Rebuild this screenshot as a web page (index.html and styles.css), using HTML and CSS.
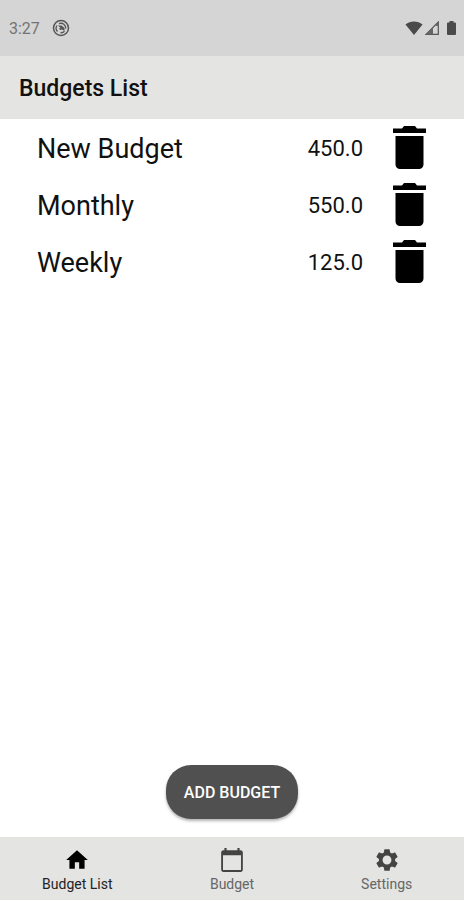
FILE: index.html
```html
<!DOCTYPE html>
<html lang="en">
<head>
  <meta charset="UTF-8">
  <meta name="viewport" content="width=device-width, initial-scale=1">
  <title>Budgets List</title>
  <link rel="stylesheet" href="styles.css">
</head>
<body>

  <!-- Status bar -->
  <div class="status-bar">
    <span class="clock">3:27</span>
    <svg class="status-app" width="18" height="18" viewBox="0 0 18 18" fill="none" stroke="#555">
      <circle cx="9" cy="9" r="7.500" stroke-width="1.500"/>
      <path d="M5.500 12.500A4.800 4.800 0 0 1 5 6.500M7 4.700a4.800 4.800 0 0 1 6.700 5M12.500 12.300a4.800 4.800 0 0 1-4 1.400" stroke-width="1.300"/>
      <path d="M6 6.500h3.500l3 2.500v3l-2.500-1.500-2 .5-1-1.500 1.500-.5z" fill="#555" stroke="none"/>
    </svg>
    <div class="status-icons">
      <svg width="18" height="14" viewBox="0 0 18 14"><path d="M9 14 0.500 3.500C5 -0.500 13 -0.500 17.500 3.500z" fill="#4a4a4a"/></svg>
      <svg width="14" height="14" viewBox="0 0 14 14"><path d="M1 13.300 13.300 1v12.300z" fill="none" stroke="#555" stroke-width="1.200"/><path d="M1 13.500 8 6v7.500zM10.500 3.800 13.500 1v4h-3z" fill="#666"/></svg>
      <svg class="battery" width="9" height="14" viewBox="0 0 9 14"><path d="M2.500 1.500V0h4v1.500H8a1 1 0 0 1 1 1V13a1 1 0 0 1-1 1H1a1 1 0 0 1-1-1V2.500a1 1 0 0 1 1-1z" fill="#4a4a4a"/></svg>
    </div>
  </div>

  <header class="app-bar">
    <h1>Budgets List</h1>
  </header>

  <!-- Budgets -->
  <main>
    <ul class="budget-list">
      <li class="budget">
        <span class="name">New Budget</span>
        <span class="amount">450.0</span>
        <button class="delete" aria-label="Delete New Budget">
          <svg width="33" height="43" viewBox="0 0 33 43"><path d="M0 2.500h9L11 0h11l2 2.500h9V7H0zM2.500 10h28v28.500a4.500 4.500 0 0 1-4.500 4.500h-19A4.500 4.500 0 0 1 2.500 38.500z"/></svg>
        </button>
      </li>
      <li class="budget">
        <span class="name">Monthly</span>
        <span class="amount">550.0</span>
        <button class="delete" aria-label="Delete Monthly">
          <svg width="33" height="43" viewBox="0 0 33 43"><path d="M0 2.500h9L11 0h11l2 2.500h9V7H0zM2.500 10h28v28.500a4.500 4.500 0 0 1-4.500 4.500h-19A4.500 4.500 0 0 1 2.500 38.500z"/></svg>
        </button>
      </li>
      <li class="budget">
        <span class="name">Weekly</span>
        <span class="amount">125.0</span>
        <button class="delete" aria-label="Delete Weekly">
          <svg width="33" height="43" viewBox="0 0 33 43"><path d="M0 2.500h9L11 0h11l2 2.500h9V7H0zM2.500 10h28v28.500a4.500 4.500 0 0 1-4.500 4.500h-19A4.500 4.500 0 0 1 2.500 38.500z"/></svg>
        </button>
      </li>
    </ul>
    <button class="add-budget">ADD BUDGET</button>
  </main>

  <!-- Bottom navigation -->
  <nav class="bottom-nav">
    <a class="tab active" href="#list">
      <svg width="26" height="26" viewBox="0 0 24 24"><path d="M10 20v-6h4v6h5v-8h3L12 3 2 12h3v8z"/></svg>
      <span>Budget List</span>
    </a>
    <a class="tab" href="#budget">
      <svg width="26" height="26" viewBox="0 0 24 24"><path d="M20 3h-1V1h-2v2H7V1H5v2H4c-1.100 0-2 .9-2 2v16c0 1.100.9 2 2 2h16c1.100 0 2-.9 2-2V5c0-1.100-.9-2-2-2zm.3 18.300H3.700V7.500h16.600v13.800z"/></svg>
      <span>Budget</span>
    </a>
    <a class="tab" href="#settings">
      <svg width="26" height="26" viewBox="0 0 24 24"><path d="M19.430 12.980c.04-.32.07-.64.07-.98s-.03-.66-.07-.98l2.110-1.650c.19-.15.24-.42.12-.64l-2-3.460c-.12-.22-.39-.3-.61-.22l-2.490 1c-.52-.4-1.080-.73-1.690-.98l-.38-2.650C14.460 2.180 14.250 2 14 2h-4c-.25 0-.46.18-.49.42l-.38 2.650c-.61.25-1.170.59-1.690.98l-2.490-1c-.23-.09-.49 0-.61.22l-2 3.460c-.13.22-.07.49.12.64l2.110 1.650c-.04.32-.07.65-.07.98s.03.66.07.98l-2.110 1.650c-.19.15-.24.42-.12.64l2 3.460c.12.22.39.3.61.22l2.490-1c.52.4 1.080.73 1.690.98l.38 2.650c.03.24.24.42.49.42h4c.25 0 .46-.18.49-.42l.38-2.650c.61-.25 1.170-.59 1.690-.98l2.490 1c.23.09.49 0 .61-.22l2-3.460c.12-.22.07-.49-.12-.64l-2.110-1.650zM12 16.100a4.100 4.100 0 1 1 0-8.200 4.100 4.100 0 0 1 0 8.200z"/></svg>
      <span>Settings</span>
    </a>
  </nav>

</body>
</html>
```

FILE: styles.css
```css
* {
  box-sizing: border-box;
}
body {
  font-family: Roboto, "Liberation Sans", sans-serif;
  background-color: #fff;
  margin: 0;
  color: #111;
  min-height: 100vh;
  display: flex;
  flex-direction: column;
}
svg {
  display: block;
}
button {
  font-family: inherit;
  border: none;
  cursor: pointer;
}
.status-bar {
  display: flex;
  align-items: center;
  gap: 12px;
  height: 56px;
  padding: 0 8px 0 9px;
  background-color: #d5d5d5;
}
.clock {
  font-size: 16px;
  color: #737373;
}
.status-icons {
  display: flex;
  gap: 2px;
  margin-left: auto;
}
.battery {
  margin-left: 6px;
}
.app-bar {
  display: flex;
  align-items: center;
  height: 63px;
  padding: 2px 19px 0;
  background-color: #e4e4e2;
}
.app-bar h1 {
  margin: 0;
  font-size: 23px;
  font-weight: 500;
}
main {
  flex: 1;
  display: flex;
  flex-direction: column;
  align-items: center;
  padding-bottom: 18px;
}
.budget-list {
  list-style: none;
  width: 100%;
  margin: 0;
  padding: 0 38px 0 37px;
}
.budget {
  display: flex;
  align-items: center;
  height: 57px;
}
.name {
  flex: 1;
  font-size: 27px;
}
.amount {
  font-size: 22px;
  margin-right: 30px;
}
.name,
.amount {
  padding-top: 2px;
}
.delete {
  padding: 0;
  background: none;
}
.add-budget {
  margin-top: auto;
  height: 54px;
  padding: 0 18px;
  border-radius: 25px;
  background-color: #505050;
  color: #fff;
  font-size: 16px;
  font-weight: 500;
  box-shadow: 0 2px 3px rgba(0,0,0,0.3);
}
.bottom-nav {
  display: flex;
  height: 63px;
  background-color: #e4e4e2;
}
.tab {
  flex: 1;
  display: flex;
  flex-direction: column;
  align-items: center;
  padding-top: 10px;
  gap: 3px;
  font-size: 14px;
  line-height: 16px;
  text-decoration: none;
  color: #666;
}
.tab svg {
  fill: #444;
}
.tab.active {
  color: #222;
}
.tab.active svg {
  fill: #000;
}
```
